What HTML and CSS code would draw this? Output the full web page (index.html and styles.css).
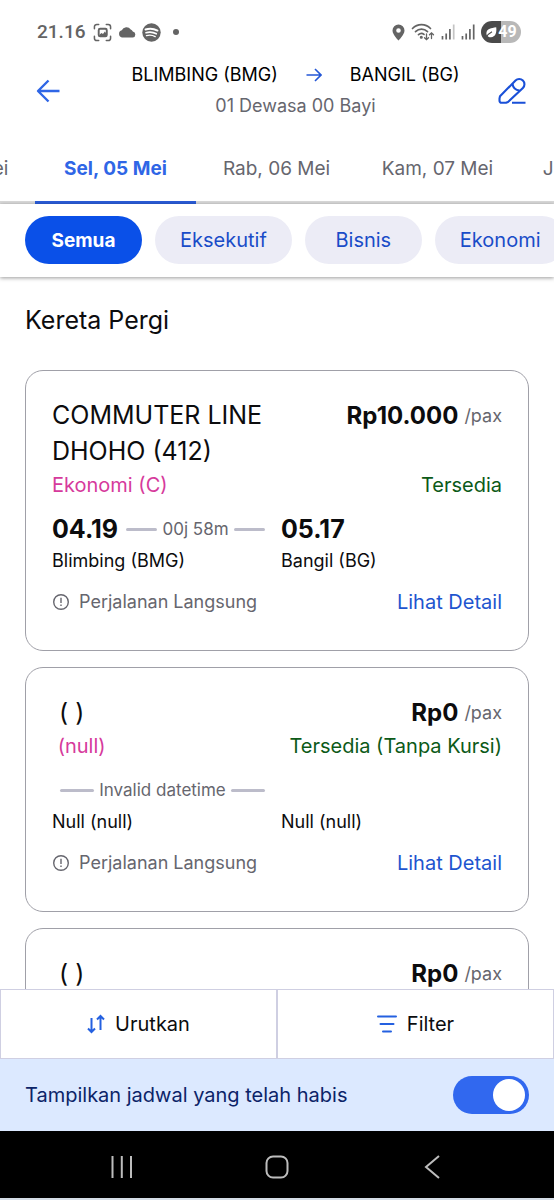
FILE: index.html
```
<!DOCTYPE html>
<html lang="id">
<head>
<meta charset="utf-8">
<meta name="viewport" content="width=device-width, initial-scale=1">
<title>Kereta Pergi</title>
<link rel="stylesheet" href="styles.css">
</head>
<body>
<div class="app">
  <div class="status">
    <div class="status-group">
      <span class="clock">21.16</span>
      <svg width="19" height="19" viewBox="0 0 20 20" fill="none" stroke="#646464" stroke-width="1.6" stroke-linecap="round"><path d="M1.5 6V4a2.500 2.500 0 0 1 2.500-2.500h2M14 1.500h2A2.500 2.500 0 0 1 18.500 4v2M18.500 14v2a2.500 2.500 0 0 1-2.500 2.500h-2M6 18.500H4A2.500 2.500 0 0 1 1.500 16v-2"/><rect x="6" y="6" width="8.500" height="8" rx="1.500" stroke-width="2"/><path d="M7 12l2-1.500 1.500 1 2-2.500 1.500 2v3H7z" fill="#646464" stroke="none"/></svg>
      <svg width="18" height="12" viewBox="0 0 18 12" fill="#646464"><path d="M4 11.500A3.700 3.700 0 0 1 3.800 4.300 5 5 0 0 1 12.700 3.500a4 4 0 0 1 2.100 1.900A3.100 3.100 0 0 1 14.800 11.500z"/></svg>
      <svg width="19" height="19" viewBox="0 0 19 19" fill="none" stroke="#fff" stroke-linecap="round"><circle cx="9.500" cy="9.500" r="9.200" fill="#646464" stroke="none"/><path d="M3.500 6.500c4-1.300 8.500-.8 12 1.100" stroke-width="1.900"/><path d="M4 9.700c3.500-1 7.200-.6 10.300 1.100" stroke-width="1.600"/><path d="M4.500 12.600c3-.8 6-.5 8.700 1" stroke-width="1.400"/></svg>
      <span class="dot"></span>
    </div>
    <div class="status-group">
      <svg width="13" height="17" viewBox="0 0 13 17" fill="#646464"><path fill-rule="evenodd" d="M6.500.5a6 6 0 0 0-6 6c0 4.200 6 10 6 10s6-5.800 6-10a6 6 0 0 0-6-6zm0 3.700a2.300 2.300 0 1 1 0 4.600 2.300 2.300 0 0 1 0-4.600z"/></svg>
      <svg width="24" height="18" viewBox="0 0 24 18" fill="none" stroke="#646464" stroke-width="1.700" stroke-linecap="round"><path d="M1.500 5.500c5-5.200 13-5.200 18 0M4.500 8.700c3.500-3.500 8.500-3.500 12 0M7.500 11.700c1.800-1.600 3.700-1.700 5.500-.3"/><circle cx="10.300" cy="14.300" r=".7"/><path d="M15.500 11v5.500m-2-1.800 2 2 2-2M20.500 15.500V10m-2 1.800 2-2 2 2" stroke-width="1.300"/></svg>
      <svg width="14" height="16" viewBox="0 0 14 16" fill="none" stroke="#646464" stroke-width="1.700"><path d="M1.500 12v3.500M5.200 9.500v6M8.900 5v10.500"/><path d="M12.700.5v15" stroke="#c4c4c4"/></svg>
      <svg width="14" height="16" viewBox="0 0 14 16" fill="none" stroke="#646464" stroke-width="1.700"><path d="M1.500 12v3.500M5.200 9.500v6M8.900 5v10.500M12.700.5v15"/></svg>
      <span class="battery"><svg width="12" height="11" viewBox="0 0 12 11"><path d="M11.200.3C12 5.800 10.300 10 6 10.200 2.600 10.400.8 7.800 1.600 4.900 2.600 1.800 6 1.300 11.200.3z" fill="#fff"/><path d="M1 10.500c1.500-2.600 3.200-4.200 6-5.700" stroke="#4a4a4a" stroke-width="1.200" fill="none"/></svg>49</span>
    </div>
  </div>

  <header class="header">
    <button class="icon-btn" aria-label="Kembali"><svg width="26" height="26" viewBox="0 0 26 26" fill="none" stroke="#2f66e6" stroke-width="2.400" stroke-linejoin="round"><path d="M24.500 13H3M13.500 2.500 3 13l10.500 10.500"/></svg></button>
    <div class="trip">
      <h1 class="route"><span>BLIMBING (BMG)</span><svg width="16" height="14" viewBox="0 0 16 14" fill="none" stroke="#2457d6" stroke-width="1.600"><path d="M.5 7h14M9 1l6 6-6 6"/></svg><span>BANGIL (BG)</span></h1>
      <p class="pax">01 Dewasa 00 Bayi</p>
    </div>
    <button class="icon-btn" aria-label="Ubah"><svg width="28" height="28" viewBox="0 0 28 28" fill="none" stroke="#1a50d8" stroke-width="2.100" stroke-linejoin="round"><path d="M1.500 21.500 2 19.300 17.500 3.500a5.200 5.200 0 0 1 7.400 0 5.200 5.200 0 0 1 0 7.400L10 25l-2 .8H3.500a2 2 0 0 1-2-2z"/><path d="M14.500 6.800c.5 3.800 3 6.200 7 6.700M14 25.800h13.500"/></svg></button>
  </header>

  <nav class="tabs-clip" aria-label="Tanggal">
    <div class="tabs">
      <button class="tab">Sen, 04 Mei</button>
      <button class="tab tab-active">Sel, 05 Mei</button>
      <button class="tab">Rab, 06 Mei</button>
      <button class="tab">Kam, 07 Mei</button>
      <button class="tab">Jum, 08 Mei</button>
    </div>
  </nav>
  <div class="chips">
    <button class="chip chip-active">Semua</button>
    <button class="chip">Eksekutif</button>
    <button class="chip">Bisnis</button>
    <button class="chip">Ekonomi</button>
  </div>

  <main class="content">
    <h2 class="heading">Kereta Pergi</h2>
    <article class="card">
      <div class="row"><h3 class="train">COMMUTER LINE DHOHO (412)</h3><p class="price"><strong>Rp10.000</strong> /pax</p></div>
      <div class="row sub"><span class="class">Ekonomi (C)</span><span class="stock">Tersedia</span></div>
      <div class="journey">
        <div class="leg"><strong class="time">04.19</strong><span class="duration">00j 58m</span></div><strong class="time">05.17</strong>
        <span class="station">Blimbing (BMG)</span><span class="station">Bangil (BG)</span>
      </div>
      <div class="row foot"><span class="direct"><svg width="18" height="18" viewBox="0 0 18 18" fill="none" stroke="#66666e" stroke-width="1.400"><circle cx="9" cy="9" r="7.300"/><path d="M9 4.800v5.200M9 11.600v1.500"/></svg>Perjalanan Langsung</span><a class="detail" href="#">Lihat Detail</a></div>
    </article>
    <article class="card">
      <div class="row"><h3 class="train"> ( )</h3><p class="price"><strong>Rp0</strong> /pax</p></div>
      <div class="row sub"><span class="class"> (null)</span><span class="stock">Tersedia (Tanpa Kursi)</span></div>
      <div class="journey">
        <div class="leg"><strong class="time"></strong><span class="duration">Invalid datetime</span></div><strong class="time"></strong>
        <span class="station">Null (null)</span><span class="station">Null (null)</span>
      </div>
      <div class="row foot"><span class="direct"><svg width="18" height="18" viewBox="0 0 18 18" fill="none" stroke="#66666e" stroke-width="1.400"><circle cx="9" cy="9" r="7.300"/><path d="M9 4.800v5.200M9 11.600v1.500"/></svg>Perjalanan Langsung</span><a class="detail" href="#">Lihat Detail</a></div>
    </article>
    <article class="card">
      <div class="row"><h3 class="train"> ( )</h3><p class="price"><strong>Rp0</strong> /pax</p></div>
    </article>
  </main>

  <div class="actions">
    <button class="action"><svg width="18" height="20" viewBox="0 0 18 20" fill="none" stroke="#2460e0" stroke-width="2"><path d="M4.500 4v14M1 14.500 4.500 18 8 14.500M13.500 16V2M10 5.500 13.500 2 17 5.500"/></svg>Urutkan</button>
    <button class="action"><svg width="20" height="18" viewBox="0 0 20 18" fill="none" stroke="#2460e0" stroke-width="2" stroke-linecap="round"><path d="M1 1.500h18M3.500 9h13M6 16.500h8"/></svg>Filter</button>
  </div>
  <label class="soldout"><span>Tampilkan jadwal yang telah habis</span><input class="switch" type="checkbox" role="switch" checked></label>
  <div class="system">
    <button class="sys-btn" aria-label="Aplikasi terbaru"><svg width="22" height="24" viewBox="0 0 22 24" stroke="#bdbdbd" stroke-width="2"><path d="M1.500 1v22M10.800 1v22M20 1v22"/></svg></button>
    <button class="sys-btn" aria-label="Beranda"><svg width="24" height="24" viewBox="0 0 24 24" fill="none" stroke="#bdbdbd" stroke-width="2"><rect x="1.500" y="1.500" width="21" height="21" rx="6.500"/></svg></button>
    <button class="sys-btn" aria-label="Kembali"><svg width="16" height="24" viewBox="0 0 16 24" fill="none" stroke="#bdbdbd" stroke-width="2"><path d="M15 1 2 12l13 11"/></svg></button>
  </div>
</div>
</body>
</html>
```
FILE: styles.css
```
* { box-sizing: border-box; }
body {
  margin: 0;
  background: #fff;
  color: #0c0c0e;
  font-family: Inter, "Liberation Sans", sans-serif;
  font-size: 20px;
}
h1, h2, h3, p { margin: 0; font-weight: 400; }
button { font: inherit; color: inherit; background: none; border: 0; padding: 0; }
svg { display: block; flex: none; }

.app { display: flex; flex-direction: column; height: 100vh; overflow: hidden; }

.status {
  display: flex;
  flex: none;
  align-items: center;
  justify-content: space-between;
  height: 60px;
  padding: 4px 33px 0 37px;
  color: #646464;
}
.status-group { display: flex; align-items: center; gap: 6px; }
.clock { font: 500 19px/24px Roboto, sans-serif; margin-right: 2px; }
.dot { width: 6px; height: 6px; margin-left: 6px; border-radius: 50%; background: #646464; }
.battery {
  display: flex;
  align-items: center;
  justify-content: center;
  gap: 1px;
  width: 40px;
  height: 22px;
  border-radius: 11px;
  background: linear-gradient(90deg, #4a4a4a 50%, #b8b8b8 50%);
  color: #fff;
  font: 700 16px/22px Roboto, sans-serif;
}

.header {
  display: flex;
  flex: none;
  align-items: center;
  justify-content: space-between;
  height: 76px;
  padding: 0 28px 15px 35px;
}
.icon-btn { display: flex; }
.trip { margin-left: 32px; text-align: center; }
.route { display: flex; align-items: center; gap: 28px; font-size: 18px; line-height: 30px; color: #000; }
.pax { font-size: 18px; line-height: 32px; color: #66666e; }

.tabs-clip { flex: none; overflow: hidden; }
.tabs { display: flex; margin-left: -126px; }
.tab {
  flex: 0 0 161px;
  height: 68px;
  border-bottom: 3px solid #d9d9d9;
  color: #66666e;
  font-size: 19px;
}
.tab-active { border-bottom-color: #2a5cd8; color: #2f66e6; font-weight: 700; }

.chips {
  display: flex;
  flex: none;
  gap: 13px;
  padding: 12px 0 13px 25px;
  overflow: hidden;
  box-shadow: 0 1px 4px rgba(0, 0, 0, .4);
}
.chip {
  flex: none;
  min-width: 117px;
  height: 48px;
  padding: 0 25px;
  border-radius: 24px;
  background: #ececf6;
  color: #1a4cc8;
}
.chip-active { background: #0a50e8; color: #fff; font-size: 19px; font-weight: 700; }

.content {
  display: flex;
  flex: 1;
  flex-direction: column;
  gap: 16px;
  min-height: 0;
  padding: 27px 25px 0;
  overflow: hidden;
}
.heading { margin-bottom: 18px; font-size: 25px; line-height: 32px; }
.card { flex: none; padding: 26px 26px 31px; border: 1px solid #a0a0a8; border-radius: 18px; }
.row { display: flex; align-items: flex-start; justify-content: space-between; }
.train { max-width: 229px; font-size: 25px; line-height: 36px; white-space: pre-wrap; }
.price { display: flex; align-items: center; gap: 6px; height: 36px; font-size: 18px; color: #66666e; white-space: nowrap; }
.price strong { font-size: 24px; color: #0c0c0e; }
.sub { line-height: 32px; }
.class { color: #d63a9c; white-space: pre; }
.stock { color: #0c5a18; }
.journey { display: grid; grid-template-columns: 229px 1fr; grid-auto-rows: 32px; margin-top: 12px; line-height: 32px; }
.leg { display: flex; align-items: center; gap: 8px; padding-right: 16px; }
.time { font-size: 25px; }
.duration { display: flex; flex: 1; align-items: center; gap: 5px; font-size: 17px; color: #66666e; white-space: nowrap; }
.duration::before, .duration::after { content: ""; flex: 1; height: 3px; border-radius: 2px; background: #bcbcca; }
.station { font-size: 18px; }
.foot { margin-top: 8px; line-height: 34px; }
.direct { display: flex; align-items: center; gap: 9px; font-size: 18px; color: #66666e; }
.detail { color: #1e55cf; text-decoration: none; }

.actions { display: flex; flex: none; }
.action {
  display: flex;
  flex: 1;
  align-items: center;
  justify-content: center;
  gap: 10px;
  height: 70px;
  border: 1px solid #cfcfe2;
}
.soldout {
  display: flex;
  flex: none;
  align-items: center;
  justify-content: space-between;
  height: 72px;
  padding: 0 25px;
  background: #dce9ff;
  color: #0c2468;
}
.switch {
  appearance: none;
  display: flex;
  align-items: center;
  justify-content: flex-end;
  width: 76px;
  height: 38px;
  margin: 0;
  padding: 0 4px;
  border-radius: 19px;
  background: #3168ef;
}
.switch::before { content: ""; width: 32px; height: 32px; border-radius: 50%; background: #fff; }
.switch:not(:checked) { justify-content: flex-start; background: #a0a0a8; }
.system {
  display: flex;
  flex: none;
  height: 69px;
  padding: 4px 45px 0;
  border-bottom: 2px solid #d4dce6;
  background: #000;
}
.sys-btn { display: flex; flex: 1; align-items: center; justify-content: center; }
```
